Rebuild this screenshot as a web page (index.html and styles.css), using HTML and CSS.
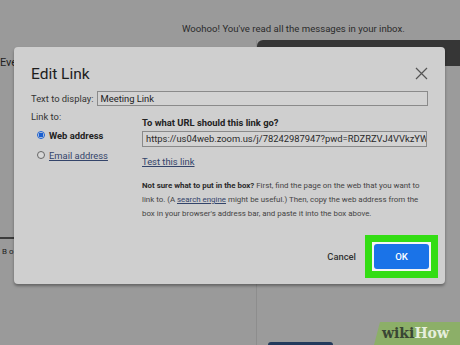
FILE: index.html
```html
<!DOCTYPE html>
<html lang="en">
<head>
    <meta charset="UTF-8">
    <meta name="viewport" content="width=device-width, initial-scale=1.0">
    <title>Edit Link</title>
    <link rel="stylesheet" href="styles.css">
</head>
<body>

<!-- dimmed mail page behind the dialog -->
<div class="page">
    <div class="top-note">Woohoo! You've read all the messages in your inbox.</div>
    <div class="left-pane">
        <div class="side-item">Eve</div>
        <div class="side-rule"></div>
        <div class="side-item small">B o</div>
    </div>
    <div class="right-pane">
        <div class="dark-bar"></div>
        <div class="spacer"></div>
        <div class="blue-stub"></div>
    </div>
</div>

<div class="dialog">
    <div class="dialog-head">
        <h1>Edit Link</h1>
        <svg class="close" width="13" height="13" viewBox="0 0 13 13">
            <path d="M1 1 L12 12 M12 1 L1 12" stroke="#555" stroke-width="1.2" fill="none"/>
        </svg>
    </div>

    <div class="display-row">
        <label>Text to display:</label>
        <div class="field">Meeting Link</div>
    </div>

    <div class="link-body">
        <div class="link-types">
            <div class="label">Link to:</div>
            <div class="radio-row">
                <span class="radio checked"></span>
                <b>Web address</b>
            </div>
            <div class="radio-row">
                <span class="radio"></span>
                <a href="#">Email address</a>
            </div>
        </div>
        <div class="link-main">
            <div class="question">To what URL should this link go?</div>
            <div class="field url">https://us04web.zoom.us/j/78242987947?pwd=RDZRZVJ4VVkzYW</div>
            <a href="#" class="test-link">Test this link</a>
            <p class="help"><b>Not sure what to put in the box?</b> First, find the page on the web that you want to link to. (A <a href="#">search engine</a> might be useful.) Then, copy the web address from the box in your browser's address bar, and paste it into the box above.</p>
        </div>
    </div>

    <div class="dialog-foot">
        <span class="cancel">Cancel</span>
        <div class="highlight">
            <button class="ok">OK</button>
        </div>
    </div>
</div>

<div class="watermark"><span class="wiki">wiki</span><span class="how">How</span></div>

</body>
</html>
```

FILE: styles.css
```css
html, body {
    margin: 0;
    padding: 0;
}
body {
    width: 460px;
    height: 345px;
    overflow: hidden;
    background: #9a9a9a;
    font-family: Roboto, "Liberation Sans", Arial, sans-serif;
    position: relative;
}
.page {
    display: grid;
    grid-template-columns: 257px 1fr;
    grid-template-rows: 40px 305px;
}
.top-note {
    grid-column: 1 / 3;
    padding: 23px 0 0 182px;
    font-size: 9.6px;
    color: #2b2b2b;
}
.left-pane {
    border-right: 1px solid #8d8d8d;
    padding-top: 16px;
}
.side-item {
    font-size: 11px;
    color: #222;
    height: 14px;
}
.side-item.small {
    font-size: 8px;
    margin-left: 2px;
    padding-top: 8px;
}
.side-rule {
    width: 14px;
    height: 2px;
    background: #3c3c3c;
    margin-top: 167px;
}
.right-pane {
    display: flex;
    flex-direction: column;
    background: #9b9b9b;
}
.dark-bar {
    height: 26px;
    background: #363636;
    border-top-left-radius: 6px;
}
.spacer {
    flex: 1;
}
.blue-stub {
    width: 65px;
    height: 3px;
    margin-left: 11px;
    background: #233a5c;
    border-radius: 3px 3px 0 0;
}

/* dialog over the page */
.dialog {
    position: absolute;
    left: 14px;
    top: 47px;
    width: 431px;
    height: 237px;
    box-sizing: border-box;
    background: #cfcfcf;
    border-radius: 4px;
    box-shadow: 0 2px 3px rgba(0, 0, 0, 0.35);
    padding: 14px 17px 0 17px;
    color: #222;
}
.dialog-head {
    display: flex;
    justify-content: space-between;
    align-items: center;
    height: 26px;
}
.dialog-head h1 {
    margin: 0;
    font-size: 15.5px;
    font-weight: 400;
    color: #1d1d1d;
}
.close {
    margin-top: -2px;
}
.display-row {
    display: flex;
    align-items: center;
    gap: 3px;
    margin-top: 4px;
}
.display-row label {
    font-size: 9.4px;
    color: #333;
}
.field {
    box-sizing: border-box;
    border: 1px solid #8a8a8a;
    background: #d2d2d2;
    font-size: 9.4px;
    color: #222;
    height: 15px;
    line-height: 13px;
    padding: 0 3px;
    white-space: nowrap;
    overflow: hidden;
}
.display-row .field {
    flex: 1;
}
.link-body {
    display: flex;
    margin-top: 5px;
}
.link-types {
    width: 111px;
    font-size: 9.4px;
}
.label {
    color: #333;
    height: 14px;
}
.radio-row {
    display: flex;
    align-items: center;
    gap: 4px;
    margin-left: 6px;
    height: 20px;
}
.radio-row b {
    color: #222;
}
.radio-row a, .link-main a {
    color: #33446a;
}
.radio {
    width: 8px;
    height: 8px;
    border-radius: 50%;
    border: 1px solid #666;
    box-sizing: border-box;
    background: #d8d8d8;
}
.radio.checked {
    border: 1px solid #1a5fd0;
    background: radial-gradient(circle, #1a5fd0 2.3px, #e0e0e0 2.6px);
}
.link-main {
    flex: 1;
    padding-top: 6px;
}
.question {
    font-size: 9.4px;
    font-weight: 700;
    color: #222;
    height: 12px;
}
.field.url {
    margin-top: 2px;
    height: 16px;
    line-height: 14px;
    width: 285px;
    color: #2a2a2a;
}
.test-link {
    display: block;
    font-size: 9.4px;
    margin-top: 9px;
}
.help {
    margin: 12px 0 0 0;
    font-size: 7.9px;
    line-height: 14px;
    color: #444;
    width: 284px;
}
.help b {
    color: #2a2a2a;
}
.dialog-foot {
    display: flex;
    justify-content: flex-end;
    align-items: center;
    gap: 9px;
    margin-top: 14px;
    margin-right: -10px;
}
.cancel {
    font-size: 9.4px;
    font-weight: 500;
    color: #333;
}
.highlight {
    border: 7px solid #33dd14;
    background: #f4f4f4;
    padding: 2px;
    display: flex;
}
.ok {
    width: 55px;
    height: 25px;
    border: none;
    border-radius: 3px;
    background: #1a73e8;
    color: #fff;
    font-family: Roboto, "Liberation Sans", Arial, sans-serif;
    font-size: 9.6px;
    font-weight: 500;
}

/* wikiHow watermark, bottom right */
.watermark {
    position: absolute;
    right: 0;
    bottom: 0;
    width: 78px;
    height: 23px;
    padding-left: 8px;
    background: #8caf68;
    clip-path: polygon(6px 0, 100% 0, 100% 100%, 0 100%);
    font-family: "DejaVu Serif", "Liberation Serif", serif;
    font-weight: 700;
    font-size: 14px;
    line-height: 23px;
}
.wiki {
    color: #3a4634;
}
.how {
    color: #e6eedd;
}
```
